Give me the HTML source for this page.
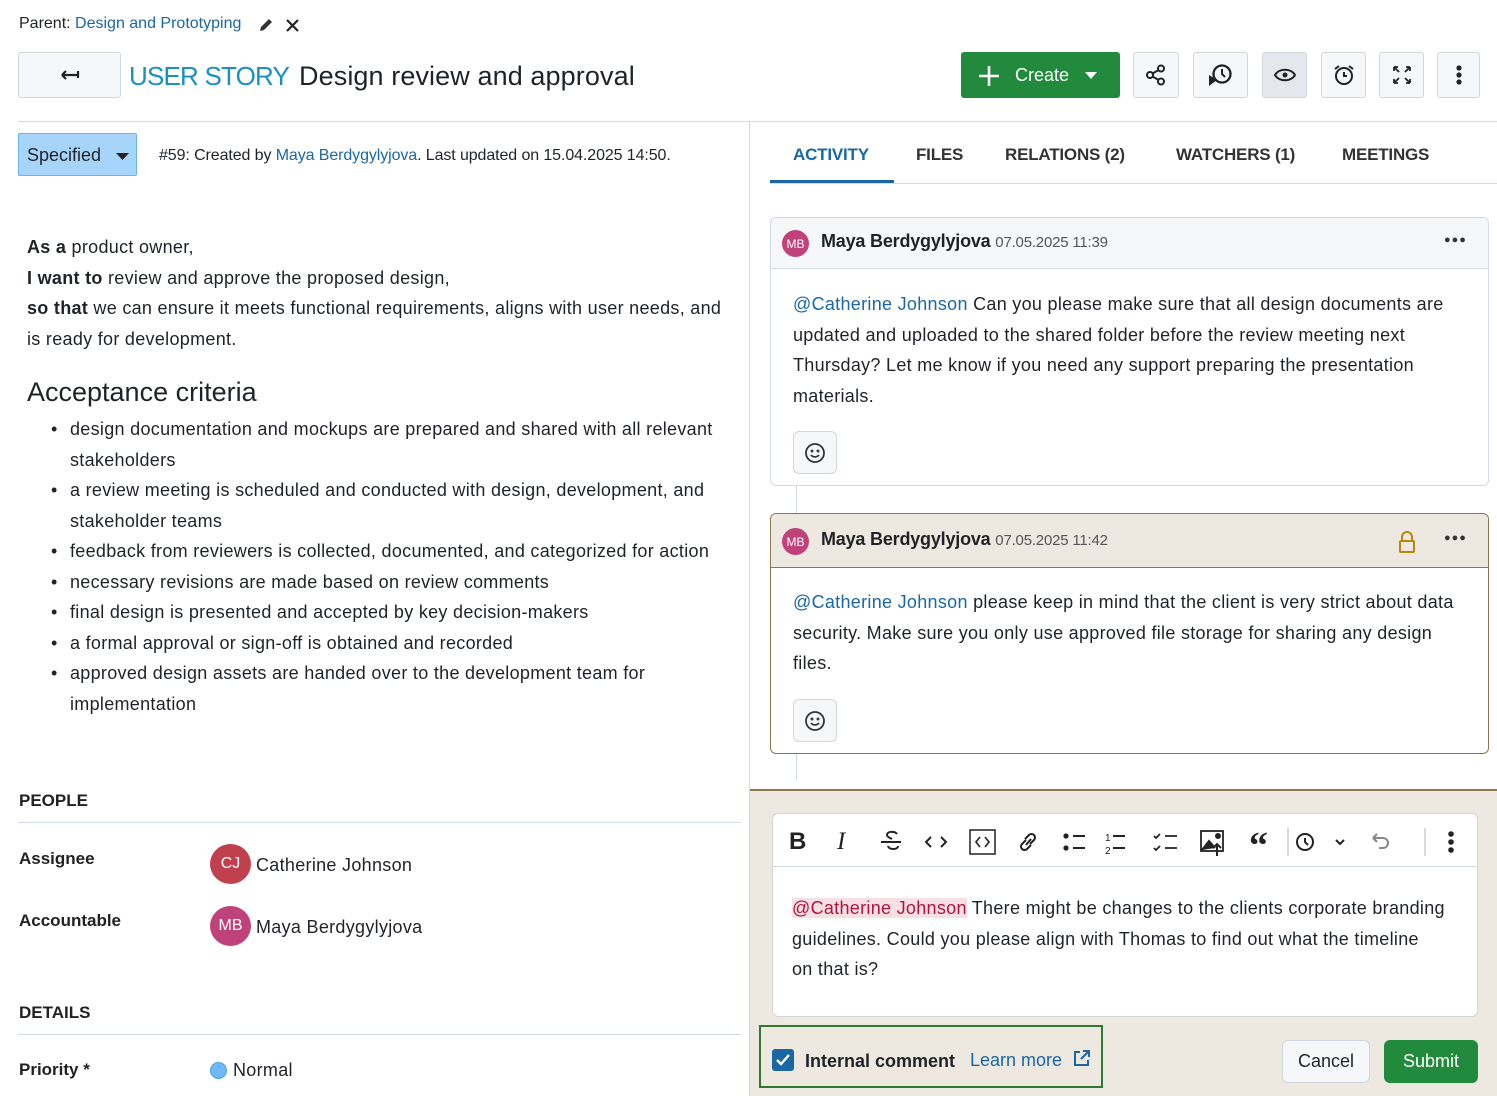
<!DOCTYPE html>
<html><head><meta charset="utf-8"><style>
*{box-sizing:border-box;margin:0;padding:0}
body{width:1497px;height:1096px;overflow:hidden;background:#fff;font-family:"Liberation Sans",sans-serif;color:#1f2328;position:relative}
.a{position:absolute;white-space:nowrap}
.link{color:#1a67a3}
.btn{position:absolute;border:1px solid #d0d7de;background:#f6f7f9;border-radius:3px;display:flex;align-items:center;justify-content:center}
.tx{font-size:18px;letter-spacing:0.3px;line-height:30.5px}
.tab{position:absolute;top:145px;font-size:17px;font-weight:bold;color:#333;letter-spacing:-0.2px}
.av{position:absolute;border-radius:50%;color:#fff;display:flex;align-items:center;justify-content:center}
.lbl{font-size:17px;font-weight:bold;color:#222}
.li{position:relative}
.li b.d{position:absolute;left:-19px;font-weight:normal}
</style></head><body>

<div class="a" style="left:19px;top:15px;font-size:16px">Parent: <span class="link">Design and Prototyping</span></div>
<svg class="a" style="left:258px;top:17px" width="16" height="16" viewBox="0 0 16 16"><path d="M2 14l1-4 8-8 3 3-8 8z" fill="#333"/></svg>
<svg class="a" style="left:285px;top:18px" width="15" height="15" viewBox="0 0 15 15"><path d="M2 2l11 11M13 2L2 13" stroke="#222" stroke-width="2.2"/></svg>

<div class="btn" style="left:18px;top:52px;width:103px;height:46px"><svg width="22" height="12" viewBox="0 0 22 12"><path d="M3 6h16M19 2v7M3 6l4-4M3 6l4 4" stroke="#222" stroke-width="2.2" fill="none"/></svg></div>
<div class="a" style="left:129px;top:61px;font-size:26px;color:#1a8fc2;letter-spacing:-0.8px">USER STORY</div>
<div class="a" style="left:299px;top:61px;font-size:27px;color:#1f2328;letter-spacing:0.1px">Design review and approval</div>

<div class="a" style="left:961px;top:52px;width:159px;height:46px;background:#228a3d;border-radius:3px;color:#fff;font-size:18px">
<svg class="a" style="left:16px;top:12px" width="24" height="24"><path d="M12 2v20M2 12h20" stroke="#fff" stroke-width="2.6"/></svg>
<span class="a" style="left:54px;top:13px">Create</span>
<svg class="a" style="left:124px;top:20px" width="12" height="7"><path d="M0 0h12L6 7z" fill="#fff"/></svg></div>
<div class="btn" style="left:1133px;top:52px;width:46px;height:46px"><svg width="22" height="22" viewBox="0 0 22 22"><circle cx="16" cy="4.5" r="3" fill="none" stroke="#222" stroke-width="2"/><circle cx="5" cy="11" r="3" fill="none" stroke="#222" stroke-width="2"/><circle cx="16" cy="17.5" r="3" fill="none" stroke="#222" stroke-width="2"/><path d="M7.6 9.5l5.8-3.4M7.6 12.5l5.8 3.4" stroke="#222" stroke-width="2"/></svg></div>
<div class="btn" style="left:1193px;top:52px;width:55px;height:46px"><svg width="26" height="24" viewBox="0 0 26 24"><circle cx="14" cy="11" r="8.5" fill="none" stroke="#222" stroke-width="2.3"/><path d="M14 6v5l3 3" stroke="#222" stroke-width="2" fill="none"/><path d="M1 12l8 5-8 6z" fill="#222"/></svg></div>
<div class="btn" style="left:1262px;top:52px;width:45px;height:46px;background:#e4e7eb"><svg width="22" height="14" viewBox="0 0 22 14"><path d="M1 7C5 0 17 0 21 7 17 14 5 14 1 7z" fill="none" stroke="#222" stroke-width="2"/><circle cx="11" cy="7" r="2.5" fill="#222"/></svg></div>
<div class="btn" style="left:1321px;top:52px;width:45px;height:46px"><svg width="22" height="22" viewBox="0 0 22 22"><circle cx="11" cy="12" r="8" fill="none" stroke="#222" stroke-width="2"/><path d="M11 8v4h3M2 5l4-3M20 5l-4-3" stroke="#222" stroke-width="2" fill="none"/></svg></div>
<div class="btn" style="left:1379px;top:52px;width:45px;height:46px"><svg width="20" height="20" viewBox="0 0 20 20" stroke="#222" stroke-width="1.8" fill="none"><path d="M2 2l5 5M2 2h4M2 2v4M18 2l-5 5M18 2h-4M18 2v4M2 18l5-5M2 18h4M2 18v-4M18 18l-5-5M18 18h-4M18 18v-4"/></svg></div>
<div class="btn" style="left:1437px;top:52px;width:43px;height:46px"><svg width="6" height="20"><circle cx="3" cy="3" r="2.6" fill="#222"/><circle cx="3" cy="10" r="2.6" fill="#222"/><circle cx="3" cy="17" r="2.6" fill="#222"/></svg></div>

<div class="a" style="left:18px;top:121px;width:1479px;height:1px;background:#d3dae2"></div>
<div class="a" style="left:749px;top:122px;width:1px;height:974px;background:#d3dae2"></div>

<div class="a" style="left:18px;top:133px;width:119px;height:43px;background:#a6d4fa;border:1px solid #6ab4ee;border-radius:2px;font-size:18px;padding:11px 0 0 8px">Specified<svg class="a" style="left:97px;top:19px" width="13" height="7"><path d="M0 0h13L6.5 7z" fill="#222"/></svg></div>
<div class="a" style="left:159px;top:147px;font-size:16px;letter-spacing:-0.1px">#59: Created by <span class="link">Maya Berdygylyjova</span>. Last updated on 15.04.2025 14:50.</div>

<div class="a tx" style="left:27px;top:232px"><b>As a</b> product owner,<br><b>I want to</b> review and approve the proposed design,<br><b>so that</b> we can ensure it meets functional requirements, aligns with user needs, and<br>is ready for development.</div>
<div class="a" style="left:27px;top:377px;font-size:27px;letter-spacing:0px">Acceptance criteria</div>
<div class="a tx" style="left:70px;top:414px">
<div class="li"><b class="d">•</b>design documentation and mockups are prepared and shared with all relevant<br>stakeholders</div>
<div class="li"><b class="d">•</b>a review meeting is scheduled and conducted with design, development, and<br>stakeholder teams</div>
<div class="li"><b class="d">•</b>feedback from reviewers is collected, documented, and categorized for action</div>
<div class="li"><b class="d">•</b>necessary revisions are made based on review comments</div>
<div class="li"><b class="d">•</b>final design is presented and accepted by key decision-makers</div>
<div class="li"><b class="d">•</b>a formal approval or sign-off is obtained and recorded</div>
<div class="li"><b class="d">•</b>approved design assets are handed over to the development team for<br>implementation</div>
</div>

<div class="a lbl" style="left:19px;top:791px">PEOPLE</div>
<div class="a" style="left:18px;top:822px;width:723px;height:1px;background:#d3dae2"></div>
<div class="a lbl" style="left:19px;top:849px">Assignee</div>
<div class="av" style="left:210px;top:844px;width:41px;height:40px;background:#c0404f;font-size:16px">CJ</div>
<div class="a" style="left:256px;top:855px;font-size:18px;letter-spacing:0.3px">Catherine Johnson</div>
<div class="a lbl" style="left:19px;top:911px">Accountable</div>
<div class="av" style="left:210px;top:906px;width:41px;height:40px;background:#c0427a;font-size:16px">MB</div>
<div class="a" style="left:256px;top:917px;font-size:18px;letter-spacing:0.3px">Maya Berdygylyjova</div>
<div class="a lbl" style="left:19px;top:1003px">DETAILS</div>
<div class="a" style="left:18px;top:1034px;width:723px;height:1px;background:#d3dae2"></div>
<div class="a lbl" style="left:19px;top:1060px">Priority *</div>
<div class="a" style="left:210px;top:1062px;width:17px;height:17px;border-radius:50%;background:#70b8f8;border:1px solid #4a9fe8"></div>
<div class="a" style="left:233px;top:1060px;font-size:18px;letter-spacing:0.3px">Normal</div>

<div class="tab" style="left:793px;color:#1a67a3">ACTIVITY</div>
<div class="tab" style="left:916px">FILES</div>
<div class="tab" style="left:1005px">RELATIONS (2)</div>
<div class="tab" style="left:1176px">WATCHERS (1)</div>
<div class="tab" style="left:1342px">MEETINGS</div>
<div class="a" style="left:770px;top:183px;width:727px;height:1px;background:#d3dae2"></div>
<div class="a" style="left:770px;top:180px;width:124px;height:3px;background:#1a67a3"></div>

<div class="a" style="left:796px;top:485px;width:1px;height:28px;background:#d3dae2"></div>
<div class="a" style="left:796px;top:753px;width:1px;height:28px;background:#d3dae2"></div>

<div class="a" style="left:770px;top:217px;width:719px;height:269px;border:1px solid #d3dae2;border-radius:6px;overflow:hidden;background:#fff">
<div class="a" style="left:0;top:0;width:717px;height:51px;background:#f6f7f9;border-bottom:1px solid #d3dae2"></div>
<div class="av" style="left:11px;top:12px;width:27px;height:27px;background:#c0427a;font-size:12px">MB</div>
<div class="a" style="left:50px;top:13px;font-size:18px;font-weight:bold;letter-spacing:-0.2px">Maya Berdygylyjova <span style="font-weight:normal;font-size:15px;color:#555">07.05.2025 11:39</span></div>
<div class="a" style="left:673px;top:16px;font-size:11px;letter-spacing:1px;color:#333">●●●</div>
<div class="a tx" style="left:22px;top:71px">
<span class="link">@Catherine Johnson</span> Can you please make sure that all design documents are<br>updated and uploaded to the shared folder before the review meeting next<br>Thursday? Let me know if you need any support preparing the presentation<br>materials.</div>
<div class="btn" style="left:22px;top:213px;width:44px;height:43px;border-radius:6px"><svg width="22" height="22" viewBox="0 0 22 22" fill="none" stroke="#333" stroke-width="1.8"><circle cx="11" cy="11" r="9"/><path d="M7 13c2 2.5 6 2.5 8 0"/><circle cx="8" cy="9" r=".6"/><circle cx="14" cy="9" r=".6"/></svg></div>
</div>

<div class="a" style="left:770px;top:513px;width:719px;height:241px;border:1px solid #8d7551;border-radius:6px;overflow:hidden;background:#fff">
<div class="a" style="left:0;top:0;width:717px;height:54px;background:#ede8e0;border-bottom:1px solid #8d7551"></div>
<div class="av" style="left:11px;top:14px;width:27px;height:27px;background:#c0427a;font-size:12px">MB</div>
<div class="a" style="left:50px;top:15px;font-size:18px;font-weight:bold;letter-spacing:-0.2px">Maya Berdygylyjova <span style="font-weight:normal;font-size:15px;color:#555">07.05.2025 11:42</span></div>
<svg class="a" style="left:627px;top:16px" width="18" height="24" viewBox="0 0 18 24" fill="none" stroke="#b8860b" stroke-width="2"><path d="M4 11V7a5 5 0 0 1 10 0v4"/><rect x="2" y="11" width="14" height="11" rx="1"/></svg>
<div class="a" style="left:673px;top:18px;font-size:11px;letter-spacing:1px;color:#333">●●●</div>
<div class="a tx" style="left:22px;top:73px">
<span class="link">@Catherine Johnson</span> please keep in mind that the client is very strict about data<br>security. Make sure you only use approved file storage for sharing any design<br>files.</div>
<div class="btn" style="left:22px;top:185px;width:44px;height:43px;border-radius:6px"><svg width="22" height="22" viewBox="0 0 22 22" fill="none" stroke="#333" stroke-width="1.8"><circle cx="11" cy="11" r="9"/><path d="M7 13c2 2.5 6 2.5 8 0"/><circle cx="8" cy="9" r=".6"/><circle cx="14" cy="9" r=".6"/></svg></div>
</div>

<div class="a" style="left:750px;top:789px;width:747px;height:307px;background:#ede8e0;border-top:2px solid #8d7551"></div>
<div class="a" style="left:772px;top:813px;width:706px;height:204px;background:#fff;border:1px solid #d0d5da;border-radius:6px">
<div class="a" style="left:0;top:52px;width:704px;height:1px;background:#d3dae2"></div>
<svg class="a" style="left:10px;top:12px" width="680" height="30" viewBox="0 0 680 30" fill="none" stroke="#222" stroke-width="2">
<text x="6" y="23" font-family="Liberation Sans" font-weight="bold" font-size="24" fill="#222" stroke="none">B</text>
<text x="54" y="23" font-family="Liberation Serif" font-style="italic" font-size="25" fill="#222" stroke="none">I</text>
<path d="M98 16h20M114 8c-2-3-10-3-10 1 0 2 3 3 5 4M105 20c1 4 10 4 10 0"/>
<path d="M148 11l-5 5 5 5M158 11l5 5-5 5"/>
<rect x="187" y="4" width="25" height="24" stroke-width="1.5"/><path d="M197 11l-4 5 4 5M202 11l4 5-4 5" stroke-width="1.6"/>
<path d="M243 14l-4 4a3.5 3.5 0 0 0 5 5l4-4M247 18l4-4a3.5 3.5 0 0 0-5-5l-4 4M243 19l5-6"/>
<circle cx="283" cy="10" r="1.6" fill="#222"/><circle cx="283" cy="22" r="1.6" fill="#222"/><path d="M290 10h12M290 22h12"/>
<path d="M330 10h12M330 22h12"/><text x="322" y="15" font-size="10" fill="#222" stroke="none" font-family="Liberation Sans">1</text><text x="322" y="28" font-size="10" fill="#222" stroke="none" font-family="Liberation Sans">2</text>
<path d="M371 10l2 2 4-4M371 22l2 2 4-4M382 10h12M382 22h12" stroke-width="1.8"/>
<rect x="418" y="5" width="22" height="20" stroke-width="1.8"/><path d="M419 24l7-9 6 7" fill="#222"/><circle cx="435" cy="10" r="2" fill="#222"/><path d="M434 30V18M430 22l4-4 4 4"/>
<text x="466" y="32" font-family="Liberation Serif" font-weight="bold" font-size="38" fill="#222" stroke="none">“</text>
<path d="M505 2v28" stroke="#ccc" stroke-width="1.5"/>
<circle cx="522" cy="16" r="8"/><path d="M522 12v4l3 3"/><path d="M553 14l4 4 4-4"/>
<path d="M590 12h10a5 5 0 0 1 0 10h-4M590 12l4-4M590 12l4 4" stroke="#888"/>
<path d="M642 2v28" stroke="#ccc" stroke-width="1.5"/>
<circle cx="668" cy="8" r="1.8" fill="#222"/><circle cx="668" cy="16" r="1.8" fill="#222"/><circle cx="668" cy="24" r="1.8" fill="#222"/>
</svg>
<div class="a tx" style="left:19px;top:79px"><span style="background:#f6e0e6;color:#b0133b">@Catherine Johnson</span> There might be changes to the clients corporate branding<br>guidelines. Could you please align with Thomas to find out what the timeline<br>on that is?</div>
</div>

<div class="a" style="left:759px;top:1025px;width:344px;height:63px;border:2px solid #2f7a2f"></div>
<div class="a" style="left:772px;top:1049px;width:22px;height:22px;background:#1a67a3;border-radius:3px"><svg width="22" height="22"><path d="M5 11l4 4 8-9" stroke="#fff" stroke-width="2.4" fill="none"/></svg></div>
<div class="a" style="left:805px;top:1051px;font-size:18px;font-weight:bold;letter-spacing:0px">Internal comment</div>
<div class="a" style="left:970px;top:1050px;font-size:18px;color:#1a67a3">Learn more</div>
<svg class="a" style="left:1073px;top:1049px" width="18" height="18" viewBox="0 0 18 18" fill="none" stroke="#1a67a3" stroke-width="2"><path d="M7 3H2v13h13v-5M10 2h6v6M16 2l-8 8"/></svg>
<div class="btn" style="left:1282px;top:1040px;width:88px;height:43px;border-radius:6px;font-size:18px">Cancel</div>
<div class="btn" style="left:1384px;top:1040px;width:94px;height:43px;border-radius:6px;font-size:18px;background:#228a3d;border-color:#228a3d;color:#fff">Submit</div>
</body></html>
